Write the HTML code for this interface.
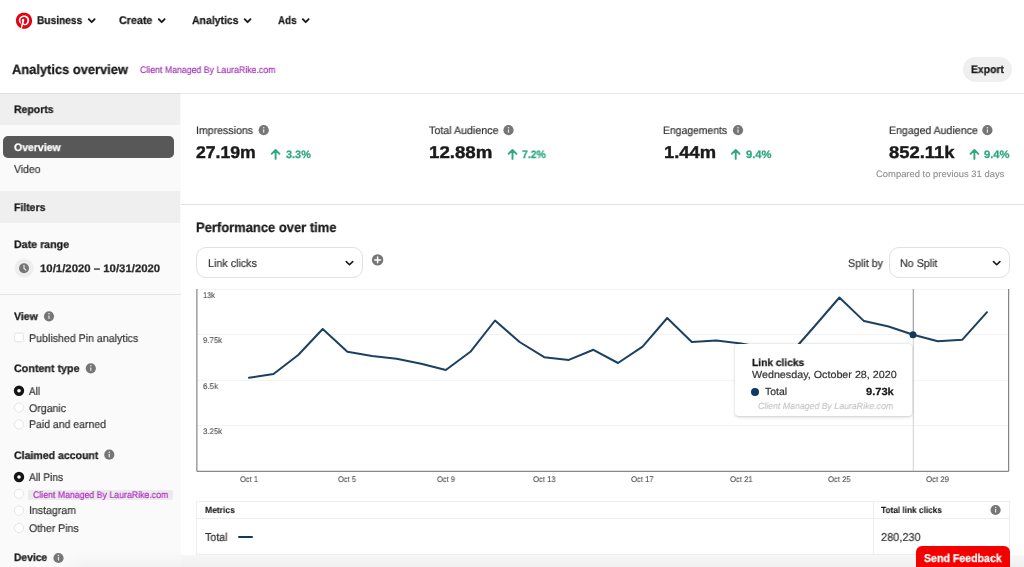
<!DOCTYPE html>
<html lang="en">
<head>
<meta charset="utf-8">
<title>Analytics overview</title>
<style>
*{box-sizing:border-box;margin:0;padding:0}
html,body{width:1024px;height:567px;overflow:hidden;background:#fff}
body{font-family:"Liberation Sans",sans-serif;color:#222;position:relative;font-size:11px;text-rendering:geometricPrecision}
.a{position:absolute}
.t{position:absolute;white-space:nowrap;line-height:1;transform-origin:0 50%;will-change:transform}
svg{position:absolute;left:0;top:0;overflow:visible}
</style>
</head>
<body>
<!-- backgrounds -->
<div class="a" style="left:0;top:93px;width:1024px;height:1px;background:#e9e9e9"></div>
<div class="a" style="left:0;top:93px;width:180.8px;height:1px;background:#dfdfdf"></div>
<div class="a" style="left:0;top:94px;width:180.8px;height:473px;background:#fafafa"></div>
<div class="a" style="left:0;top:94px;width:179.6px;height:31px;background:#efefef"></div>
<div class="a" style="left:3px;top:135.8px;width:171.3px;height:22.3px;border-radius:5px;background:#585858"></div>
<div class="a" style="left:0;top:190.7px;width:179.6px;height:32px;background:#efefef"></div>
<div class="a" style="left:0;top:294px;width:180.5px;height:1px;background:#e6e6e6"></div>
<div class="a" style="left:181px;top:204px;width:843px;height:1px;background:#e3e3e3"></div>
<div class="a" style="left:962.9px;top:57.1px;width:49.1px;height:24.7px;border-radius:12.4px;background:#efefef"></div>
<div class="a" style="left:28.3px;top:489.5px;width:145.2px;height:10px;background:#ebebeb;border-radius:1.5px"></div>
<!-- dropdowns -->
<div class="a" style="left:196px;top:247px;width:166.5px;height:30.5px;border:1px solid #e1e1e1;border-radius:10px;background:#fff"></div>
<div class="a" style="left:889px;top:247px;width:120.5px;height:30.5px;border:1px solid #e1e1e1;border-radius:10px;background:#fff"></div>
<!-- table -->
<div class="a" style="left:196px;top:500.5px;width:813.8px;height:54.8px;border:1px solid #eeeeee;background:#fff"></div>
<div class="a" style="left:197px;top:518px;width:812px;height:1px;background:#eeeeee"></div>
<div class="a" style="left:873px;top:501px;width:1px;height:54px;background:#eeeeee"></div>
<div class="a" style="left:237.6px;top:535.5px;width:15.3px;height:2.5px;background:#12395c;border-radius:1px"></div>

<svg width="1024" height="567" viewBox="0 0 1024 567">
  <!-- logo -->
  <circle cx="24" cy="20.7" r="7.6" fill="#fff"/>
  <path fill="#e60012" transform="translate(15.9,12.6) scale(0.675)" d="M12.017 0C5.396 0 .029 5.367.029 11.987c0 5.079 3.158 9.417 7.618 11.162-.105-.949-.199-2.403.041-3.439.219-.937 1.406-5.957 1.406-5.957s-.359-.72-.359-1.781c0-1.663.967-2.911 2.168-2.911 1.024 0 1.518.769 1.518 1.688 0 1.029-.653 2.567-.992 3.992-.285 1.193.6 2.165 1.775 2.165 2.128 0 3.768-2.245 3.768-5.487 0-2.861-2.063-4.869-5.008-4.869-3.41 0-5.409 2.562-5.409 5.199 0 1.033.394 2.143.889 2.741.099.12.112.225.085.345-.09.375-.293 1.199-.334 1.363-.053.225-.172.271-.401.165-1.495-.69-2.433-2.878-2.433-4.646 0-3.776 2.748-7.252 7.92-7.252 4.158 0 7.392 2.967 7.392 6.923 0 4.135-2.607 7.462-6.233 7.462-1.214 0-2.354-.629-2.758-1.379l-.749 2.848c-.269 1.045-1.004 2.352-1.498 3.146 1.123.345 2.306.535 3.55.535 6.607 0 11.985-5.365 11.985-11.987C23.97 5.39 18.592.026 11.985.026L12.017 0z"/>
  <g transform="translate(91.7 20.7)"><path d="M-2.95 -1.5L0 1.5L2.95 -1.5" fill="none" stroke="#1a1a1a" stroke-width="1.85" stroke-linecap="round" stroke-linejoin="round"/></g>
  <g transform="translate(161.7 20.7)"><path d="M-2.95 -1.5L0 1.5L2.95 -1.5" fill="none" stroke="#1a1a1a" stroke-width="1.85" stroke-linecap="round" stroke-linejoin="round"/></g>
  <g transform="translate(247.6 20.7)"><path d="M-2.95 -1.5L0 1.5L2.95 -1.5" fill="none" stroke="#1a1a1a" stroke-width="1.85" stroke-linecap="round" stroke-linejoin="round"/></g>
  <g transform="translate(305.7 20.7)"><path d="M-2.95 -1.5L0 1.5L2.95 -1.5" fill="none" stroke="#1a1a1a" stroke-width="1.85" stroke-linecap="round" stroke-linejoin="round"/></g>
  <g transform="translate(349.5 263.1)"><path d="M-3.2 -1.5L0 1.6L3.2 -1.5" fill="none" stroke="#1a1a1a" stroke-width="1.6" stroke-linecap="round" stroke-linejoin="round"/></g>
  <g transform="translate(996.7 263.1)"><path d="M-3.2 -1.5L0 1.6L3.2 -1.5" fill="none" stroke="#1a1a1a" stroke-width="1.6" stroke-linecap="round" stroke-linejoin="round"/></g>
  <!-- clock -->
  <circle cx="24.1" cy="268" r="9.6" fill="#eeeeee"/>
  <circle cx="24" cy="268.2" r="5" fill="#767676"/>
  <path d="M24 265.2V268.4L25.9 270.2" fill="none" stroke="#eee" stroke-width="1.1" stroke-linecap="round" stroke-linejoin="round"/>
  <!-- info icons -->
  <g transform="translate(49 316.3)"><circle r="5.1" fill="#767676"/><rect x="-0.6" y="-0.9" width="1.2" height="3.5" rx="0.4" fill="#e6e6e6"/><circle cy="-2.5" r="0.8" fill="#e6e6e6"/></g>
  <g transform="translate(90.8 368.3)"><circle r="5.1" fill="#767676"/><rect x="-0.6" y="-0.9" width="1.2" height="3.5" rx="0.4" fill="#e6e6e6"/><circle cy="-2.5" r="0.8" fill="#e6e6e6"/></g>
  <g transform="translate(109.3 454.7)"><circle r="5.1" fill="#767676"/><rect x="-0.6" y="-0.9" width="1.2" height="3.5" rx="0.4" fill="#e6e6e6"/><circle cy="-2.5" r="0.8" fill="#e6e6e6"/></g>
  <g transform="translate(58.5 558)"><circle r="5.1" fill="#767676"/><rect x="-0.6" y="-0.9" width="1.2" height="3.5" rx="0.4" fill="#e6e6e6"/><circle cy="-2.5" r="0.8" fill="#e6e6e6"/></g>
  <g transform="translate(263.7 130.2)"><circle r="5.1" fill="#767676"/><rect x="-0.6" y="-0.9" width="1.2" height="3.5" rx="0.4" fill="#e6e6e6"/><circle cy="-2.5" r="0.8" fill="#e6e6e6"/></g>
  <g transform="translate(508.5 130.2)"><circle r="5.1" fill="#767676"/><rect x="-0.6" y="-0.9" width="1.2" height="3.5" rx="0.4" fill="#e6e6e6"/><circle cy="-2.5" r="0.8" fill="#e6e6e6"/></g>
  <g transform="translate(738 130.2)"><circle r="5.1" fill="#767676"/><rect x="-0.6" y="-0.9" width="1.2" height="3.5" rx="0.4" fill="#e6e6e6"/><circle cy="-2.5" r="0.8" fill="#e6e6e6"/></g>
  <g transform="translate(987.4 130.2)"><circle r="5.1" fill="#767676"/><rect x="-0.6" y="-0.9" width="1.2" height="3.5" rx="0.4" fill="#e6e6e6"/><circle cy="-2.5" r="0.8" fill="#e6e6e6"/></g>
  <g transform="translate(995.6 510)"><circle r="5.1" fill="#767676"/><rect x="-0.6" y="-0.9" width="1.2" height="3.5" rx="0.4" fill="#e6e6e6"/><circle cy="-2.5" r="0.8" fill="#e6e6e6"/></g>
  <!-- checkbox & radios -->
  <rect x="14.7" y="333.1" width="8.7" height="8.7" rx="1.5" fill="#fff" stroke="#dedede" stroke-width="0.8"/>
  <g transform="translate(19 390.8)"><circle r="3.5" fill="#fff" stroke="#151515" stroke-width="3.4"/></g>
  <g transform="translate(19 407.6)"><circle r="4.6" fill="#fff" stroke="#e0e0e0" stroke-width="0.8"/></g>
  <g transform="translate(19 424.4)"><circle r="4.6" fill="#fff" stroke="#e0e0e0" stroke-width="0.8"/></g>
  <g transform="translate(19 477)"><circle r="3.5" fill="#fff" stroke="#151515" stroke-width="3.4"/></g>
  <g transform="translate(19 493.8)"><circle r="4.6" fill="#fff" stroke="#e0e0e0" stroke-width="0.8"/></g>
  <g transform="translate(19 510.7)"><circle r="4.6" fill="#fff" stroke="#e0e0e0" stroke-width="0.8"/></g>
  <g transform="translate(19 528)"><circle r="4.6" fill="#fff" stroke="#e0e0e0" stroke-width="0.8"/></g>
  <!-- arrows -->
  <g transform="translate(275.6 154.3)"><path d="M0 4.6V-4.2M-3.9 -0.5L0 -4.4L3.9 -0.5" fill="none" stroke="#2fa77f" stroke-width="1.9" stroke-linecap="round" stroke-linejoin="round"/></g>
  <g transform="translate(512.5 154.3)"><path d="M0 4.6V-4.2M-3.9 -0.5L0 -4.4L3.9 -0.5" fill="none" stroke="#2fa77f" stroke-width="1.9" stroke-linecap="round" stroke-linejoin="round"/></g>
  <g transform="translate(735.7 154.3)"><path d="M0 4.6V-4.2M-3.9 -0.5L0 -4.4L3.9 -0.5" fill="none" stroke="#2fa77f" stroke-width="1.9" stroke-linecap="round" stroke-linejoin="round"/></g>
  <g transform="translate(974.4 154.3)"><path d="M0 4.6V-4.2M-3.9 -0.5L0 -4.4L3.9 -0.5" fill="none" stroke="#2fa77f" stroke-width="1.9" stroke-linecap="round" stroke-linejoin="round"/></g>
  <!-- plus -->
  <circle cx="377.6" cy="259.9" r="5.7" fill="#767676"/>
  <path d="M377.6 257v5.8M374.7 259.9h5.8" stroke="#fff" stroke-width="1.5" stroke-linecap="round"/>
  <!-- chart -->
  <path d="M197 289.3H1009M197 334.5H1009M197 380.3H1009M197 425.7H1009" stroke="#f2f2f2" stroke-width="1"/>
  <path d="M913.3 289V471" stroke="#cfcfcf" stroke-width="1"/>
  <path d="M913.3 289V335" stroke="#9c9c9c" stroke-width="1"/>
  <path d="M196.9 289V471.3H1008.7V289" fill="none" stroke="#6c6c6c" stroke-width="1"/>
  <polyline fill="none" stroke="#1b4162" stroke-width="2" stroke-linejoin="round" stroke-linecap="round"
   points="249,377.7 273.5,374 298.2,355 322.7,329 347.4,351.8 372,356 396.6,358.7 421.2,363.8 445.8,370 470.4,351.8 495,320.5 519.6,342 544.2,357.2 568.8,359.9 593.4,349.8 618,363 642.6,346.7 667.2,318 691.8,342 716.4,340.5 741,343.6 765.6,348 790.2,354 814.8,326 839.4,297.5 864,321.1 888.6,326.5 913.2,334.7 937.8,341.3 962.4,339.7 987,312.2"/>
  <circle cx="913" cy="334.8" r="3.5" fill="#12395c"/>
</svg>

<!-- tooltip -->
<div class="a" style="left:735.2px;top:344px;width:177px;height:72px;background:#fff;border-radius:4px;box-shadow:0 0.5px 3px rgba(0,0,0,.22)"></div>
<div class="a" style="left:750.8px;top:388.1px;width:7.8px;height:7.8px;border-radius:50%;background:#0f3a66"></div>

<!-- bottom shadow + feedback -->
<div class="a" style="left:181px;top:555.4px;width:843px;height:12px;background:rgba(0,0,0,.028)"></div>
<div class="a" style="left:75px;top:572px;width:960px;height:10px;box-shadow:0 0 20px 5px rgba(0,0,0,.075)"></div>
<div class="a" style="left:916px;top:545.5px;width:93.6px;height:30px;border-radius:6px;background:#f40000"></div>

<div class="t" style="left:37.4px;top:16px;font-size:11.2px;color:#1a1a1a;font-weight:bold;-webkit-text-stroke:0.25px #1a1a1a;transform:scaleX(0.9085);">Business</div>
<div class="t" style="left:118.9px;top:16px;font-size:11.2px;color:#1a1a1a;font-weight:bold;-webkit-text-stroke:0.25px #1a1a1a;transform:scaleX(0.9561);">Create</div>
<div class="t" style="left:191.6px;top:16px;font-size:11.2px;color:#1a1a1a;font-weight:bold;-webkit-text-stroke:0.25px #1a1a1a;transform:scaleX(0.9347);">Analytics</div>
<div class="t" style="left:277.6px;top:16px;font-size:11.2px;color:#1a1a1a;font-weight:bold;-webkit-text-stroke:0.25px #1a1a1a;transform:scaleX(0.8798);">Ads</div>
<div class="t" style="left:11.6px;top:63px;font-size:13.5px;color:#1a1a1a;font-weight:bold;-webkit-text-stroke:0.25px #1a1a1a;transform:scaleX(0.9542);">Analytics overview</div>
<div class="t" style="left:139.5px;top:66px;font-size:9.6px;color:#a33ab5;-webkit-text-stroke:0.2px #a33ab5;transform:scaleX(0.9140);">Client Managed By LauraRike.com</div>
<div class="t" style="left:970.6px;top:65px;font-size:11px;color:#1a1a1a;font-weight:bold;-webkit-text-stroke:0.25px #1a1a1a;transform:scaleX(0.9413);">Export</div>
<div class="t" style="left:14.3px;top:105px;font-size:10.9px;color:#1a1a1a;font-weight:bold;-webkit-text-stroke:0.25px #1a1a1a;transform:scaleX(0.9622);">Reports</div>
<div class="t" style="left:14.3px;top:143px;font-size:10.9px;color:#fff;font-weight:bold;-webkit-text-stroke:0.25px #fff;transform:scaleX(0.9621);">Overview</div>
<div class="t" style="left:14.3px;top:165px;font-size:11.2px;color:#333;-webkit-text-stroke:0.2px #333;transform:scaleX(0.9324);">Video</div>
<div class="t" style="left:14.3px;top:203px;font-size:10.9px;color:#1a1a1a;font-weight:bold;-webkit-text-stroke:0.25px #1a1a1a;transform:scaleX(0.9576);">Filters</div>
<div class="t" style="left:14.3px;top:240px;font-size:10.9px;color:#1a1a1a;font-weight:bold;-webkit-text-stroke:0.25px #1a1a1a;transform:scaleX(0.9787);">Date range</div>
<div class="t" style="left:40.1px;top:264px;font-size:10.9px;color:#2a2a2a;font-weight:bold;-webkit-text-stroke:0.25px #2a2a2a;transform:scaleX(1.0445);">10/1/2020 – 10/31/2020</div>
<div class="t" style="left:14.3px;top:312px;font-size:10.9px;color:#1a1a1a;font-weight:bold;-webkit-text-stroke:0.25px #1a1a1a;transform:scaleX(0.9665);">View</div>
<div class="t" style="left:29.3px;top:334px;font-size:11.2px;color:#333;-webkit-text-stroke:0.2px #333;transform:scaleX(0.9490);">Published Pin analytics</div>
<div class="t" style="left:14.3px;top:364px;font-size:10.9px;color:#1a1a1a;font-weight:bold;-webkit-text-stroke:0.25px #1a1a1a;transform:scaleX(0.9855);">Content type</div>
<div class="t" style="left:29.3px;top:387px;font-size:11.2px;color:#333;-webkit-text-stroke:0.2px #333;transform:scaleX(0.8844);">All</div>
<div class="t" style="left:29.3px;top:404px;font-size:11.2px;color:#333;-webkit-text-stroke:0.2px #333;transform:scaleX(0.9467);">Organic</div>
<div class="t" style="left:29.3px;top:420px;font-size:11.2px;color:#333;-webkit-text-stroke:0.2px #333;transform:scaleX(0.9366);">Paid and earned</div>
<div class="t" style="left:14.3px;top:451px;font-size:10.9px;color:#1a1a1a;font-weight:bold;-webkit-text-stroke:0.25px #1a1a1a;transform:scaleX(0.9684);">Claimed account</div>
<div class="t" style="left:29.3px;top:473px;font-size:11.2px;color:#333;-webkit-text-stroke:0.2px #333;transform:scaleX(0.9139);">All Pins</div>
<div class="t" style="left:33.0px;top:491px;font-size:9.6px;color:#b030c4;-webkit-text-stroke:0.2px #b030c4;transform:scaleX(0.9126);">Client Managed By LauraRike.com</div>
<div class="t" style="left:29.3px;top:506px;font-size:11.2px;color:#333;-webkit-text-stroke:0.2px #333;transform:scaleX(0.9447);">Instagram</div>
<div class="t" style="left:29.3px;top:524px;font-size:11.2px;color:#333;-webkit-text-stroke:0.2px #333;transform:scaleX(0.9402);">Other Pins</div>
<div class="t" style="left:14.3px;top:553px;font-size:10.9px;color:#1a1a1a;font-weight:bold;-webkit-text-stroke:0.25px #1a1a1a;transform:scaleX(0.9452);">Device</div>
<div class="t" style="left:196.1px;top:126px;font-size:10.9px;color:#333;-webkit-text-stroke:0.2px #333;transform:scaleX(0.9707);">Impressions</div>
<div class="t" style="left:196.3px;top:144px;font-size:17px;color:#1a1a1a;font-weight:bold;-webkit-text-stroke:0.4px #1a1a1a;transform:scaleX(1.0369);">27.19m</div>
<div class="t" style="left:285.7px;top:150px;font-size:10.8px;color:#2fa77f;font-weight:bold;-webkit-text-stroke:0.25px #2fa77f;transform:scaleX(1.0118);">3.3%</div>
<div class="t" style="left:428.6px;top:126px;font-size:10.9px;color:#333;-webkit-text-stroke:0.2px #333;transform:scaleX(0.9810);">Total Audience</div>
<div class="t" style="left:429.0px;top:144px;font-size:17px;color:#1a1a1a;font-weight:bold;-webkit-text-stroke:0.4px #1a1a1a;transform:scaleX(1.0993);">12.88m</div>
<div class="t" style="left:521.8px;top:150px;font-size:10.8px;color:#2fa77f;font-weight:bold;-webkit-text-stroke:0.25px #2fa77f;transform:scaleX(0.9671);">7.2%</div>
<div class="t" style="left:663.3px;top:126px;font-size:10.9px;color:#333;-webkit-text-stroke:0.2px #333;transform:scaleX(0.9536);">Engagements</div>
<div class="t" style="left:664.0px;top:144px;font-size:17px;color:#1a1a1a;font-weight:bold;-webkit-text-stroke:0.4px #1a1a1a;transform:scaleX(1.0808);">1.44m</div>
<div class="t" style="left:745.7px;top:150px;font-size:10.8px;color:#2fa77f;font-weight:bold;-webkit-text-stroke:0.25px #2fa77f;transform:scaleX(1.0403);">9.4%</div>
<div class="t" style="left:888.6px;top:126px;font-size:10.9px;color:#333;-webkit-text-stroke:0.2px #333;transform:scaleX(0.9699);">Engaged Audience</div>
<div class="t" style="left:888.9px;top:144px;font-size:17px;color:#1a1a1a;font-weight:bold;-webkit-text-stroke:0.4px #1a1a1a;transform:scaleX(1.0807);">852.11k</div>
<div class="t" style="left:983.9px;top:150px;font-size:10.8px;color:#2fa77f;font-weight:bold;-webkit-text-stroke:0.25px #2fa77f;transform:scaleX(1.0403);">9.4%</div>
<div class="t" style="left:875.9px;top:170px;font-size:9.2px;color:#8c8c8c;-webkit-text-stroke:0.1px #8c8c8c;transform:scaleX(1.0254);">Compared to previous 31 days</div>
<div class="t" style="left:196.3px;top:221px;font-size:13.7px;color:#1a1a1a;font-weight:bold;-webkit-text-stroke:0.25px #1a1a1a;transform:scaleX(0.9471);">Performance over time</div>
<div class="t" style="left:207.8px;top:259px;font-size:11.2px;color:#333;-webkit-text-stroke:0.2px #333;transform:scaleX(0.9572);">Link clicks</div>
<div class="t" style="left:848.2px;top:259px;font-size:11.2px;color:#333;-webkit-text-stroke:0.2px #333;transform:scaleX(0.9540);">Split by</div>
<div class="t" style="left:900.3px;top:259px;font-size:11.2px;color:#333;-webkit-text-stroke:0.2px #333;transform:scaleX(0.9569);">No Split</div>
<div class="t" style="left:203.0px;top:292px;font-size:8.2px;color:#4a4a4a;-webkit-text-stroke:0.1px #4a4a4a;transform:scaleX(0.9089);">13k</div>
<div class="t" style="left:202.5px;top:337px;font-size:8.2px;color:#4a4a4a;-webkit-text-stroke:0.1px #4a4a4a;transform:scaleX(0.9535);">9.75k</div>
<div class="t" style="left:202.5px;top:383px;font-size:8.2px;color:#4a4a4a;-webkit-text-stroke:0.1px #4a4a4a;transform:scaleX(0.9687);">6.5k</div>
<div class="t" style="left:202.5px;top:428px;font-size:8.2px;color:#4a4a4a;-webkit-text-stroke:0.1px #4a4a4a;transform:scaleX(0.9535);">3.25k</div>
<div class="t" style="left:239.6px;top:476px;font-size:8.2px;color:#4a4a4a;-webkit-text-stroke:0.1px #4a4a4a;transform:scaleX(0.9194);">Oct 1</div>
<div class="t" style="left:338.3px;top:476px;font-size:8.2px;color:#4a4a4a;-webkit-text-stroke:0.1px #4a4a4a;transform:scaleX(0.9194);">Oct 5</div>
<div class="t" style="left:436.8px;top:476px;font-size:8.2px;color:#4a4a4a;-webkit-text-stroke:0.1px #4a4a4a;transform:scaleX(0.9194);">Oct 9</div>
<div class="t" style="left:532.7px;top:476px;font-size:8.2px;color:#4a4a4a;-webkit-text-stroke:0.1px #4a4a4a;transform:scaleX(0.9368);">Oct 13</div>
<div class="t" style="left:631.2px;top:476px;font-size:8.2px;color:#4a4a4a;-webkit-text-stroke:0.1px #4a4a4a;transform:scaleX(0.9368);">Oct 17</div>
<div class="t" style="left:729.5px;top:476px;font-size:8.2px;color:#4a4a4a;-webkit-text-stroke:0.1px #4a4a4a;transform:scaleX(0.9368);">Oct 21</div>
<div class="t" style="left:828.1px;top:476px;font-size:8.2px;color:#4a4a4a;-webkit-text-stroke:0.1px #4a4a4a;transform:scaleX(0.9368);">Oct 25</div>
<div class="t" style="left:925.9px;top:476px;font-size:8.2px;color:#4a4a4a;-webkit-text-stroke:0.1px #4a4a4a;transform:scaleX(0.9534);">Oct 29</div>
<div class="t" style="left:751.6px;top:359px;font-size:10.3px;color:#1a1a1a;font-weight:bold;-webkit-text-stroke:0.25px #1a1a1a;transform:scaleX(0.9894);">Link clicks</div>
<div class="t" style="left:751.6px;top:371px;font-size:10.3px;color:#333;-webkit-text-stroke:0.2px #333;transform:scaleX(1.0431);">Wednesday, October 28, 2020</div>
<div class="t" style="left:764.6px;top:388px;font-size:10.3px;color:#333;-webkit-text-stroke:0.2px #333;transform:scaleX(1.0161);">Total</div>
<div class="t" style="left:866.0px;top:388px;font-size:10.3px;color:#1a1a1a;font-weight:bold;-webkit-text-stroke:0.25px #1a1a1a;transform:scaleX(1.0783);">9.73k</div>
<div class="t" style="left:757.8px;top:402px;font-size:9.1px;color:#c2c2c2;font-style:italic;-webkit-text-stroke:0.1px #c2c2c2;transform:scaleX(0.9621);">Client Managed By LauraRike.com</div>
<div class="t" style="left:204.5px;top:506px;font-size:8.9px;color:#1a1a1a;font-weight:bold;-webkit-text-stroke:0.1px #1a1a1a;transform:scaleX(0.9589);">Metrics</div>
<div class="t" style="left:881.2px;top:506px;font-size:8.9px;color:#1a1a1a;font-weight:bold;-webkit-text-stroke:0.1px #1a1a1a;transform:scaleX(0.9307);">Total link clicks</div>
<div class="t" style="left:204.8px;top:533px;font-size:11.5px;color:#333;-webkit-text-stroke:0.2px #333;transform:scaleX(0.9260);">Total</div>
<div class="t" style="left:881.2px;top:533px;font-size:11.5px;color:#333;-webkit-text-stroke:0.2px #333;transform:scaleX(0.9524);">280,230</div>
<div class="t" style="left:923.8px;top:554px;font-size:11.4px;color:#fff;font-weight:bold;-webkit-text-stroke:0.25px #fff;transform:scaleX(0.9298);">Send Feedback</div>
</body>
</html>
